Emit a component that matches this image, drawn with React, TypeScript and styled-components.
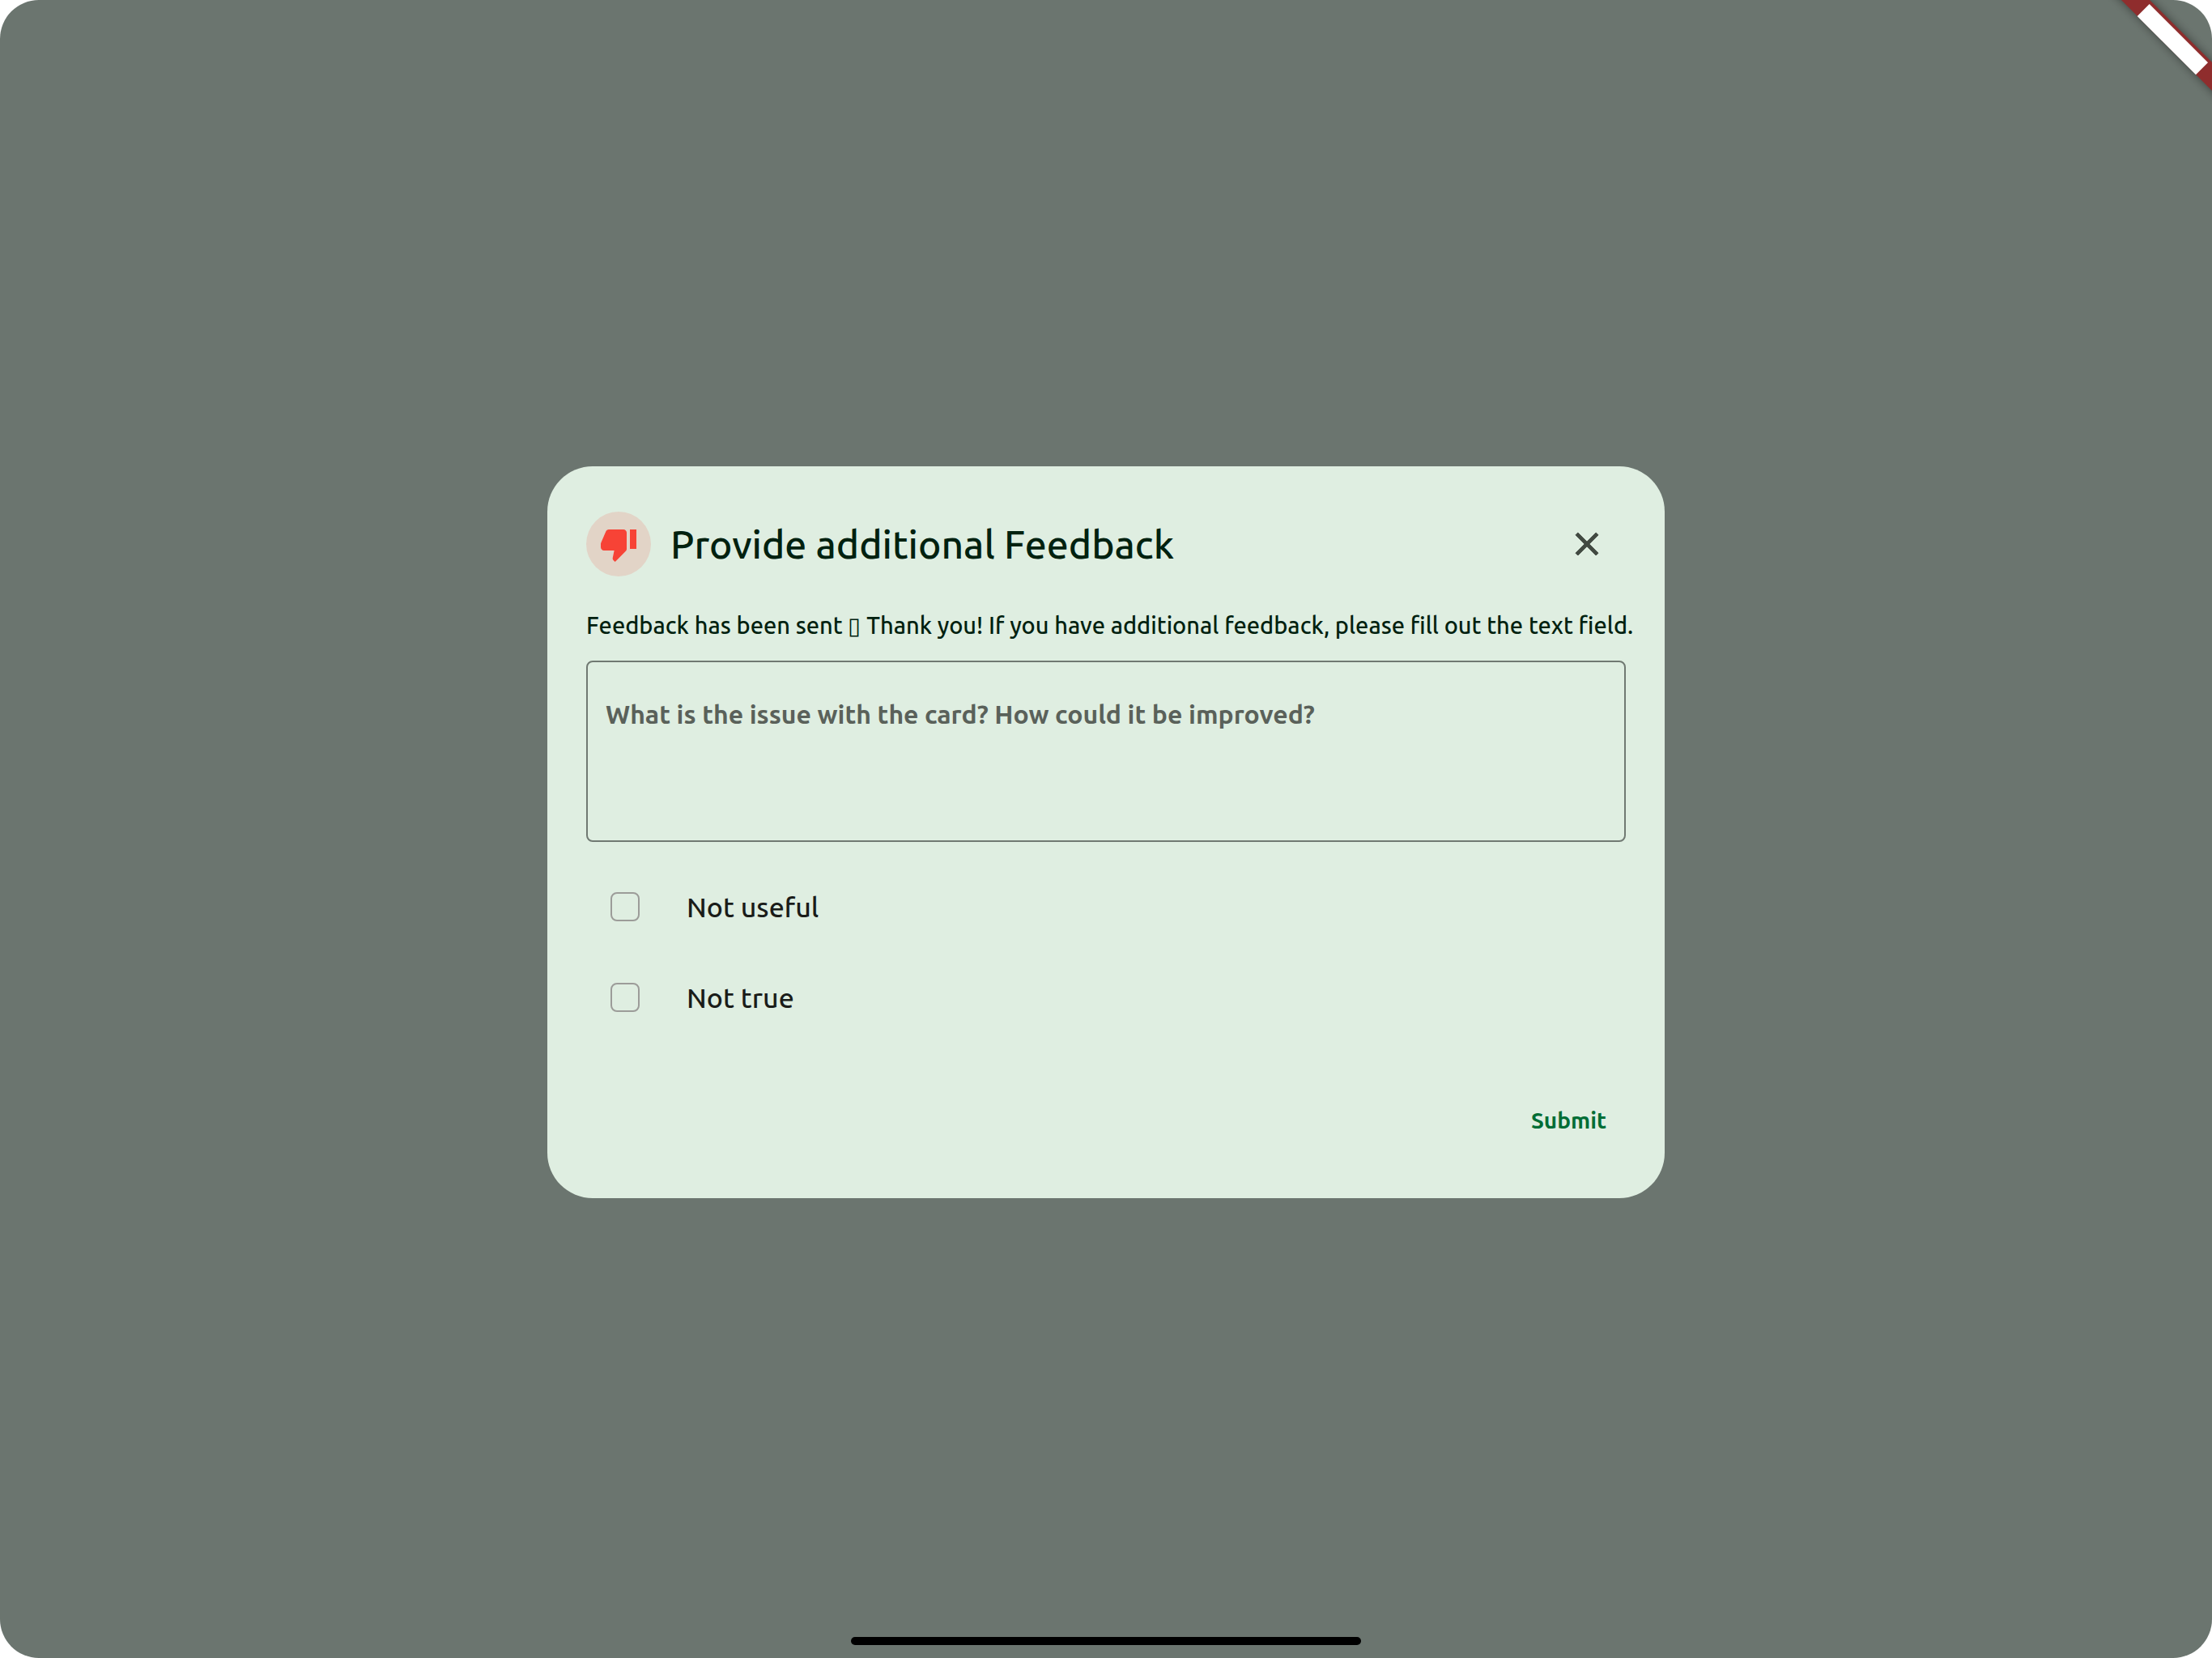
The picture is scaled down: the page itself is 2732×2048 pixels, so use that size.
import React, { useState } from 'react';
import styled, { createGlobalStyle } from 'styled-components';
import { MdClose, MdThumbDown } from 'react-icons/md';

const GlobalStyle = createGlobalStyle`
  *, *::before, *::after { box-sizing: border-box; }
  body {
    margin: 0;
    background: #ffffff;
    font-family: Ubuntu, "Noto Sans", "Open Sans", sans-serif;
  }
  button, textarea { font: inherit; }
`;

const Screen = styled.main`
  position: relative;
  display: flex;
  align-items: center;
  justify-content: center;
  min-height: 100vh;
  padding: 48px 80px 40px;
  overflow: hidden;
  border-radius: 48px;
  background: #6b756f;
`;

const Ribbon = styled.svg`
  position: absolute;
  top: 0;
  right: 0;
  width: 160px;
  height: 130px;
`;

const HomeIndicator = styled.div`
  position: absolute;
  bottom: 16px;
  left: 50%;
  width: 630px;
  height: 10px;
  transform: translateX(-50%);
  border-radius: 5px;
  background: #000000;
`;

const Dialog = styled.form`
  display: flex;
  flex-direction: column;
  width: 100%;
  max-width: 1380px;
  padding: 48px;
  border-radius: 56px;
  background: #dfeee1;
  color: #00210f;
`;

const Header = styled.header`
  display: flex;
  align-items: center;
  gap: 24px;
  margin-bottom: 32px;
`;

const IconBadge = styled.span`
  display: flex;
  align-items: center;
  justify-content: center;
  width: 80px;
  height: 80px;
  border-radius: 50%;
  background: #e2d4c7;
  color: #f74336;
`;

const Title = styled.h1`
  flex: 1;
  margin: 0;
  font-size: 48px;
  font-weight: 500;
  line-height: 64px;
`;

const CloseButton = styled.button`
  display: flex;
  align-items: center;
  justify-content: center;
  width: 96px;
  height: 96px;
  padding: 0;
  border: 0;
  border-radius: 50%;
  background: transparent;
  color: #414941;

  path:not([fill='none']) {
    stroke: currentColor;
    stroke-width: 0.5;
  }

  path[fill='none'] {
    stroke: none;
  }
`;

const Message = styled.label`
  margin: 0 -16px 24px 0;
  font-size: 29px;
  font-weight: 500;
  line-height: 40px;
`;

const FeedbackInput = styled.textarea`
  height: 224px;
  padding: 40px 22px;
  border: 2px solid #707972;
  border-radius: 8px;
  background: transparent;
  color: #00210f;
  font-size: 32px;
  font-weight: 700;
  line-height: 48px;
  resize: none;

  &::placeholder {
    color: #5a615a;
    opacity: 1;
  }
`;

const Options = styled.div`
  display: flex;
  flex-direction: column;
  margin: 24px 0 48px;
`;

const Option = styled.label`
  display: flex;
  align-items: center;
  gap: 58px;
  height: 112px;
  padding-left: 30px;
  color: #1a1c19;
  font-size: 34px;
  font-weight: 500;
  line-height: 48px;
`;

const Checkbox = styled.input`
  appearance: none;
  width: 36px;
  height: 36px;
  margin: 0;
  border: 2px solid #9c9c99;
  border-radius: 8px;

  &:checked {
    border-color: #006d35;
    background: #006d35;
  }
`;

const SubmitButton = styled.button`
  align-self: flex-end;
  height: 96px;
  padding: 0 24px;
  border: 0;
  border-radius: 48px;
  background: transparent;
  color: #006d35;
  font-size: 28px;
  font-weight: 700;
  line-height: 40px;
`;

const reasons = ['Not useful', 'Not true'];

function CornerRibbon() {
  return (
    <Ribbon viewBox="0 0 160 130" aria-hidden="true">
      <defs>
        <filter id="ribbon-shadow" x="-30%" y="-30%" width="160%" height="160%">
          <feGaussianBlur stdDeviation="6" />
        </filter>
      </defs>
      <path d="M28-20L180 132V97L63-20z" fill="#000" opacity=".45" filter="url(#ribbon-shadow)" />
      <path d="M28-20L180 132V97L63-20z" fill="#8f2d2d" />
      <path d="M82.700 5L155 77.300L140 92.300L67.700 20z" fill="#fff" />
    </Ribbon>
  );
}

export default function App() {
  const [checked, setChecked] = useState<string[]>([]);
  const toggle = (reason: string) =>
    setChecked((current) =>
      current.includes(reason) ? current.filter((item) => item !== reason) : [...current, reason],
    );

  return (
    <>
      <GlobalStyle />
      <Screen>
        <Dialog onSubmit={(event) => event.preventDefault()}>
          <Header>
            <IconBadge>
              <MdThumbDown size={48} />
            </IconBadge>
            <Title>Provide additional Feedback</Title>
            <CloseButton type="button" aria-label="Close">
              <MdClose size={48} />
            </CloseButton>
          </Header>
          <Message htmlFor="feedback">
            Feedback has been sent ▯ Thank you! If you have additional feedback, please fill out the text field.
          </Message>
          <FeedbackInput
            id="feedback"
            placeholder="What is the issue with the card? How could it be improved?"
          />
          <Options>
            {reasons.map((reason) => (
              <Option key={reason}>
                <Checkbox
                  type="checkbox"
                  checked={checked.includes(reason)}
                  onChange={() => toggle(reason)}
                />
                {reason}
              </Option>
            ))}
          </Options>
          <SubmitButton type="submit">Submit</SubmitButton>
        </Dialog>
        <CornerRibbon />
        <HomeIndicator />
      </Screen>
    </>
  );
}
